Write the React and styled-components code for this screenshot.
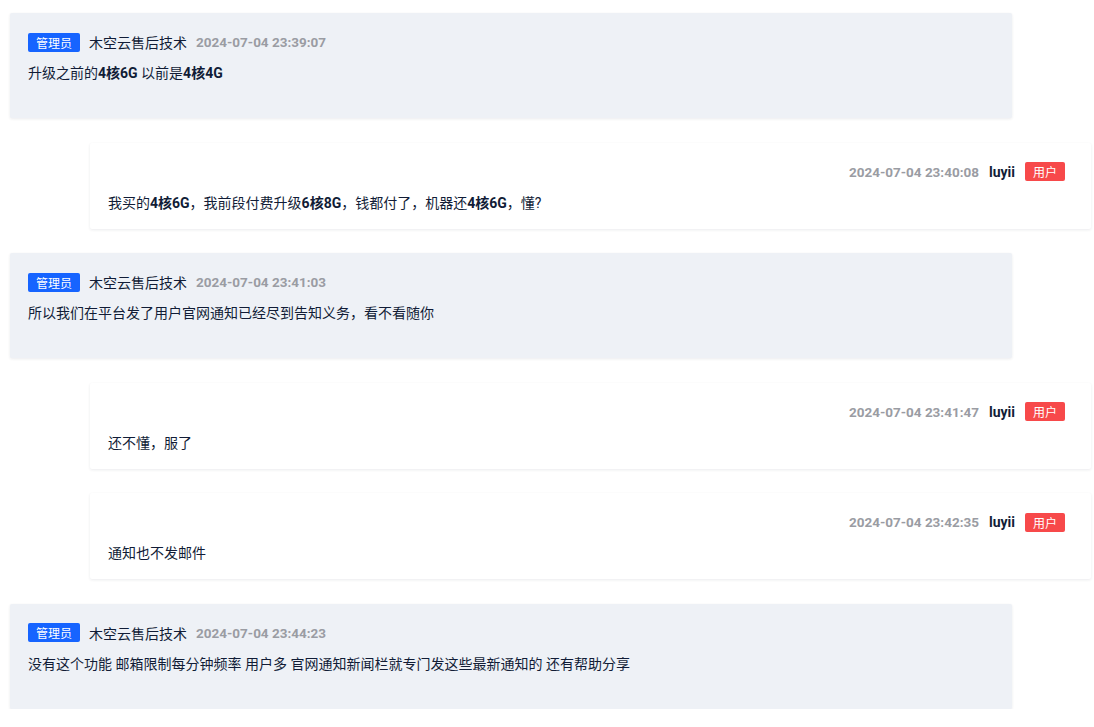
import React from 'react';
import styled, { createGlobalStyle } from 'styled-components';

const messages = [
    { admin: true, name: '木空云售后技术', time: '2024-07-04 23:39:07', text: ['升级之前的', ['4核6G'], ' 以前是', ['4核4G']] },
    { admin: false, name: 'luyii', time: '2024-07-04 23:40:08', text: ['我买的', ['4核6G'], '，我前段付费升级', ['6核8G'], '，钱都付了，机器还', ['4核6G'], '，懂?'] },
    { admin: true, name: '木空云售后技术', time: '2024-07-04 23:41:03', text: ['所以我们在平台发了用户官网通知已经尽到告知义务，看不看随你'] },
    { admin: false, name: 'luyii', time: '2024-07-04 23:41:47', text: ['还不懂，服了'] },
    { admin: false, name: 'luyii', time: '2024-07-04 23:42:35', text: ['通知也不发邮件'] },
    { admin: true, name: '木空云售后技术', time: '2024-07-04 23:44:23', text: ['没有这个功能 邮箱限制每分钟频率 用户多 官网通知新闻栏就专门发这些最新通知的 还有帮助分享'] },
];

class App extends React.Component {
    render() {
        return (
            <>
                <GlobalStyle />
                <List>
                    {messages.map((m, i) => (
                        <Card key={i} admin={m.admin}>
                            <Header admin={m.admin}>
                                {m.admin ? (
                                    <>
                                        <Badge color="#1664ff">管理员</Badge>
                                        <Name>{m.name}</Name>
                                        <Time>{m.time}</Time>
                                    </>
                                ) : (
                                    <>
                                        <Time>{m.time}</Time>
                                        <Name bold>{m.name}</Name>
                                        <Badge color="#f7494a">用户</Badge>
                                    </>
                                )}
                            </Header>
                            <Body>
                                {m.text.map((t, j) => (
                                    Array.isArray(t) ? <Strong key={j}>{t[0]}</Strong> : <span key={j}>{t}</span>
                                ))}
                            </Body>
                        </Card>
                    ))}
                </List>
            </>
        );
    }
};

const GlobalStyle = createGlobalStyle`
    body {
        margin: 0;
        background: #fff;
        font-family: Roboto, "Noto Sans CJK SC", sans-serif;
        color: #111c36;
    }
`;

const List = styled.div`
    display: flex;
    flex-direction: column;
    gap: 24.6px;
    padding: 13px 3px 0 10px;
`;

const Card = styled.div`
    box-sizing: border-box;
    height: ${p => p.admin ? '105px' : '86px'};
    background: ${p => p.admin ? '#eef1f6' : '#fff'};
    margin: ${p => p.admin ? '0 79px 0 0' : '0 0 0 80px'};
    padding: ${p => p.admin ? '19px 18px 0' : '19px 26px 0 18px'};
    border-radius: 2px;
    box-shadow: 0 1px 3px rgba(20, 30, 60, 0.09);
`;

const Header = styled.div`
    display: flex;
    align-items: center;
    justify-content: ${p => p.admin ? 'flex-start' : 'flex-end'};
    gap: ${p => p.admin ? '9px' : '10px'};
    height: 20px;
    margin-bottom: 10px;
`;

const Badge = styled.span`
    display: inline-flex;
    align-items: center;
    height: 19px;
    padding: 0 8px;
    border-radius: 2px;
    background: ${p => p.color};
    color: #fff;
    font-size: 12px;
    font-family: "Noto Sans CJK SC", sans-serif;
`;

const Name = styled.span`
    font-size: 14px;
    font-weight: ${p => p.bold ? 700 : 400};
    color: #111c36;
`;

const Time = styled.span`
    font-size: 13.5px;
    font-weight: 700;
    color: #9a9ca3;
`;

const Body = styled.div`
    font-size: 14px;
    line-height: 22px;
    color: #111c36;
`;

const Strong = styled.b`
    font-weight: 700;
`;

export default App;
